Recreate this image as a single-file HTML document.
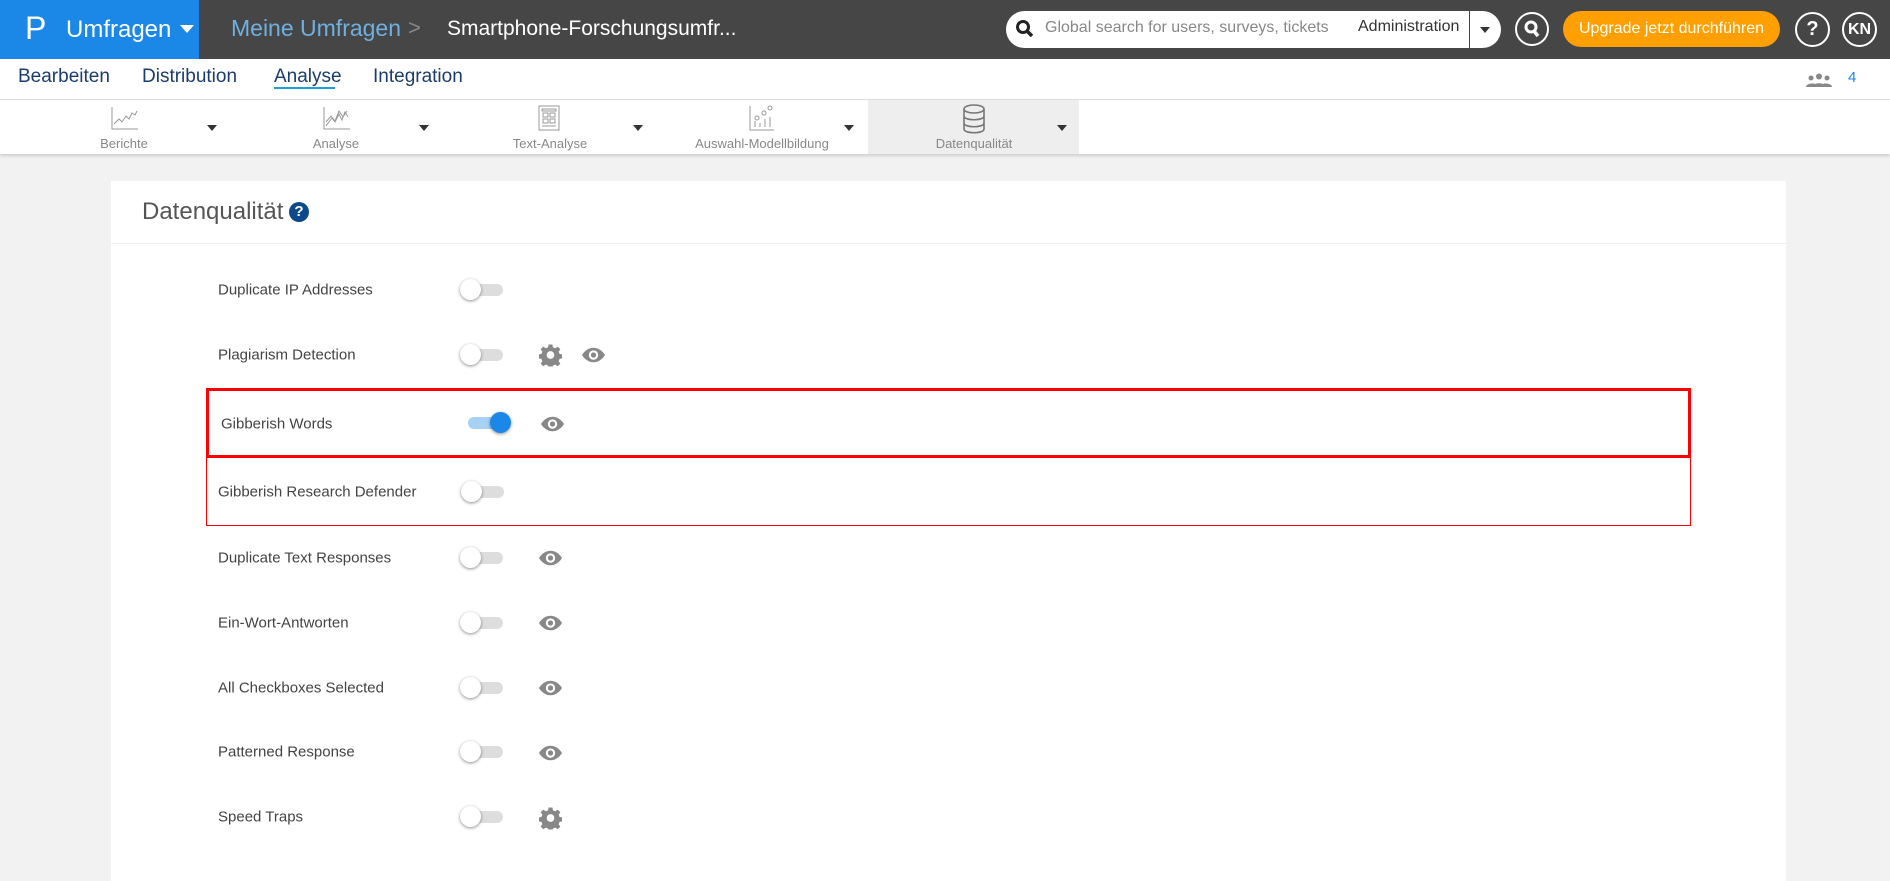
<!DOCTYPE html>
<html><head><meta charset="utf-8"><style>
*{margin:0;padding:0;box-sizing:border-box}
body{width:1890px;height:845px;overflow:hidden;background:#f2f2f2;font-family:"Liberation Sans",sans-serif;position:relative}
.abs{position:absolute}
.top{left:0;top:0;width:1890px;height:59px;background:#464646}
.blue{left:0;top:0;width:199px;height:59px;background:#1b87e6}
.nav{left:0;top:59px;width:1890px;height:41px;background:#fff;border-bottom:1px solid #ddd}
.nav span{position:absolute;top:7px;font-size:19px;color:#1a3d6e}
.tb{left:0;top:100px;width:1890px;height:54px;background:#fff;box-shadow:0 2px 3px rgba(0,0,0,.15)}
.ti{position:absolute;top:0;height:54px;text-align:center}
.ti .lb{position:absolute;top:36px;width:200px;font-size:13px;color:#888}
.arr{position:absolute;top:25px;width:0;height:0;border-left:5px solid transparent;border-right:5px solid transparent;border-top:6px solid #333}
.card{left:111px;top:181px;width:1675px;height:700px;background:#fff}
.lbl{position:absolute;left:218px;font-size:15px;color:#444;transform:translateY(-50%)}
.tg{position:absolute;width:41px;height:12px;border-radius:6px;background:#ddd;transform:translateY(-50%)}
.tg::after{content:"";position:absolute;left:-2px;top:-5px;width:21px;height:21px;border-radius:50%;background:#fff;box-shadow:0 1px 3px rgba(0,0,0,.45)}
.tg.on{background:#a7d0f5}
.tg.on::after{left:22px;background:#1b87e6}
.ic{position:absolute;transform:translateY(-50%)}
</style></head><body>
<div class="abs top"></div>
<div class="abs blue"></div>
<div class="abs" style="left:25px;top:10px;color:#fff;font-size:32px">P</div>
<div class="abs" style="left:66px;top:16px;color:#fff;font-size:24px">Umfragen</div>
<div class="abs" style="left:180px;top:25px;border-left:7px solid transparent;border-right:7px solid transparent;border-top:8px solid #fff"></div>
<div class="abs" style="left:231px;top:15px;color:#6fb0e0;font-size:23px">Meine Umfragen</div>
<div class="abs" style="left:408px;top:15px;color:#888;font-size:22px">&gt;</div>
<div class="abs" style="left:447px;top:17px;color:#fff;font-size:21px">Smartphone-Forschungsumfr...</div>
<div class="abs" style="left:1006px;top:11px;width:495px;height:37px;background:#fff;border-radius:19px"></div>
<svg class="abs" style="left:1015px;top:19px" width="20" height="20" viewBox="0 0 20 20"><circle cx="8" cy="8" r="5.5" fill="none" stroke="#222" stroke-width="3"/><path d="M12 12l5 5" stroke="#222" stroke-width="3.5"/></svg>
<div class="abs" style="left:1045px;top:19px;font-size:16px;color:#888">Global search for users, surveys, tickets</div>
<div class="abs" style="left:1358px;top:18px;font-size:16px;color:#333">Administration</div>
<div class="abs" style="left:1469px;top:11px;width:1px;height:37px;background:#444"></div>
<div class="abs" style="left:1480px;top:27px;border-left:5px solid transparent;border-right:5px solid transparent;border-top:6px solid #333"></div>
<div class="abs" style="left:1515px;top:12px;width:34px;height:34px;border:2px solid #fff;border-radius:50%"></div>
<svg class="abs" style="left:1522px;top:19px" width="20" height="20" viewBox="0 0 20 20"><circle cx="9" cy="8" r="5" fill="none" stroke="#fff" stroke-width="3"/><path d="M12 12l4 5" stroke="#fff" stroke-width="3.5"/></svg>
<div class="abs" style="left:1563px;top:11px;width:217px;height:36px;background:#ff9f00;border-radius:18px;color:#fff;font-size:16px;text-align:center;line-height:36px">Upgrade jetzt durchführen</div>
<div class="abs" style="left:1795px;top:12px;width:35px;height:35px;border:2px solid #fff;border-radius:50%;color:#fff;font-weight:bold;font-size:20px;text-align:center;line-height:31px">?</div>
<div class="abs" style="left:1842px;top:12px;width:35px;height:35px;border:2px solid #fff;border-radius:50%;color:#fff;font-weight:bold;font-size:16px;text-align:center;line-height:31px">KN</div>

<div class="abs nav">
<span style="left:18px">Bearbeiten</span><span style="left:142px">Distribution</span><span style="left:274px">Analyse</span><span style="left:373px">Integration</span>
<div style="position:absolute;left:274px;top:28px;width:61px;height:2px;background:#1ea0e0"></div>
<svg style="position:absolute;left:1806px;top:14px" width="26" height="14" viewBox="0 0 26 14" fill="#888"><circle cx="13" cy="3.5" r="3"/><path d="M7 14c0-5 12-5 12 0z"/><circle cx="5" cy="5" r="2.5"/><path d="M0 14c0-4 9-4 9-3v3z"/><circle cx="21" cy="5" r="2.5"/><path d="M26 14c0-4-9-4-9-3v3z"/></svg>
<span style="left:1848px;top:10px;font-size:15px;color:#1b87e6">4</span>
</div>

<div class="abs tb">
<div style="position:absolute;left:868px;top:0;width:211px;height:54px;background:#eee"></div>
<div class="ti" style="left:24px"><svg style="position:absolute;left:86px;top:6px" width="30" height="24" viewBox="0 0 30 24" fill="none" stroke="#999" stroke-width="1"><path d="M2 1v22h26M4 18l5-5 3 3 4-6 3 3 3-6 3 2 2-4"/></svg><div class="lb">Berichte</div></div>
<div class="arr" style="left:207px"></div>
<div class="ti" style="left:236px"><svg style="position:absolute;left:86px;top:6px" width="30" height="24" viewBox="0 0 30 24" fill="none" stroke="#999" stroke-width="1"><path d="M2 1v22h26M4 20l6-8 3 4 4-8 3 6 3-8 3 5M4 16l5-6 4 5 4-10 4 6 4-6"/></svg><div class="lb">Analyse</div></div>
<div class="arr" style="left:419px"></div>
<div class="ti" style="left:450px"><svg style="position:absolute;left:85px;top:4px" width="30" height="28" viewBox="0 0 30 28" fill="none" stroke="#999" stroke-width="1"><rect x="4" y="2" width="20" height="24"/><rect x="7" y="5" width="14" height="2"/><rect x="8" y="9" width="5" height="4"/><rect x="15" y="9" width="5" height="4"/><rect x="8" y="15" width="5" height="4"/><rect x="15" y="15" width="5" height="4"/><path d="M7 22h14"/></svg><div class="lb">Text-Analyse</div></div>
<div class="arr" style="left:633px"></div>
<div class="ti" style="left:662px"><svg style="position:absolute;left:85px;top:4px" width="30" height="28" viewBox="0 0 30 28" fill="none" stroke="#999" stroke-width="1"><path d="M3 2v24h24M8 23v-6M13 23v-4M18 23v-8M23 23v-10"/><circle cx="10" cy="14" r="2"/><circle cx="17" cy="9" r="2"/><circle cx="23" cy="4" r="2"/></svg><div class="lb">Auswahl-Modellbildung</div></div>
<div class="arr" style="left:844px"></div>
<div class="ti" style="left:874px"><svg style="position:absolute;left:87px;top:4px" width="26" height="30" viewBox="0 0 26 30" fill="none" stroke="#777" stroke-width="1.6"><ellipse cx="13" cy="5" rx="10" ry="4"/><path d="M3 5v20c0 5 20 5 20 0V5M3 12c0 5 20 5 20 0M3 19c0 5 20 5 20 0"/></svg><div class="lb">Datenqualität</div></div>
<div class="arr" style="left:1057px"></div>
</div>

<div class="abs card">
<div style="position:absolute;left:31px;top:17px;font-size:24px;color:#555">Datenqualität</div>
<div style="position:absolute;left:178px;top:21px;width:20px;height:20px;border-radius:50%;background:#0d4a8c;color:#fff;font-weight:bold;font-size:15px;text-align:center;line-height:20px">?</div>
<div style="position:absolute;left:0;top:62px;width:1675px;height:1px;background:#eee"></div>
</div>

<div class="abs" style="left:206px;top:388px;width:1485px;height:70px;border:3px solid #f00"></div>
<div class="abs" style="left:206px;top:458px;width:1485px;height:68px;border:1px solid #f00;border-top:none"></div>

<div class="lbl" style="top:290px">Duplicate IP Addresses</div><div class="tg" style="left:462px;top:290px"></div>
<div class="lbl" style="top:355px">Plagiarism Detection</div><div class="tg" style="left:462px;top:355px"></div>
<div class="lbl" style="top:424px;left:221px">Gibberish Words</div><div class="tg on" style="left:468px;top:423px"></div>
<div class="lbl" style="top:492px">Gibberish Research Defender</div><div class="tg" style="left:463px;top:492px"></div>
<div class="lbl" style="top:558px">Duplicate Text Responses</div><div class="tg" style="left:462px;top:558px"></div>
<div class="lbl" style="top:623px">Ein-Wort-Antworten</div><div class="tg" style="left:462px;top:623px"></div>
<div class="lbl" style="top:688px">All Checkboxes Selected</div><div class="tg" style="left:462px;top:688px"></div>
<div class="lbl" style="top:752px">Patterned Response</div><div class="tg" style="left:462px;top:752px"></div>
<div class="lbl" style="top:817px">Speed Traps</div><div class="tg" style="left:462px;top:817px"></div>

<svg width="0" height="0" style="position:absolute"><defs>
<symbol id="eye" viewBox="0 0 24 16"><path d="M12 1C6 1 2 6 1 8c1 2 5 7 11 7s10-5 11-7c-1-2-5-7-11-7z" fill="#888"/><circle cx="12" cy="8" r="4.5" fill="#fff"/><circle cx="12" cy="8" r="2.5" fill="#888"/></symbol>
<symbol id="gear" viewBox="0 0 24 24"><path fill="#888" d="M10 1h4l.6 3 2.4 1 2.5-1.8 2.8 2.8L20.5 8.5l1 2.4 3 .6v4l-3 .6-1 2.4 1.8 2.5-2.8 2.8-2.5-1.8-2.4 1-.6 3h-4l-.6-3-2.4-1-2.5 1.8-2.8-2.8 1.8-2.5-1-2.4-3-.6v-4l3-.6 1-2.4L1.7 6l2.8-2.8L7 5l2.4-1z"/><circle cx="12" cy="12" r="4" fill="#fff"/></symbol>
</defs></svg>
<svg class="ic" style="left:539px;top:355px" width="23" height="23"><use href="#gear"/></svg>
<svg class="ic" style="left:581px;top:355px" width="25" height="17"><use href="#eye"/></svg>
<svg class="ic" style="left:540px;top:424px" width="25" height="17"><use href="#eye"/></svg>
<svg class="ic" style="left:538px;top:558px" width="25" height="17"><use href="#eye"/></svg>
<svg class="ic" style="left:538px;top:623px" width="25" height="17"><use href="#eye"/></svg>
<svg class="ic" style="left:538px;top:688px" width="25" height="17"><use href="#eye"/></svg>
<svg class="ic" style="left:538px;top:753px" width="25" height="17"><use href="#eye"/></svg>
<svg class="ic" style="left:539px;top:818px" width="23" height="23"><use href="#gear"/></svg>
</body></html>
